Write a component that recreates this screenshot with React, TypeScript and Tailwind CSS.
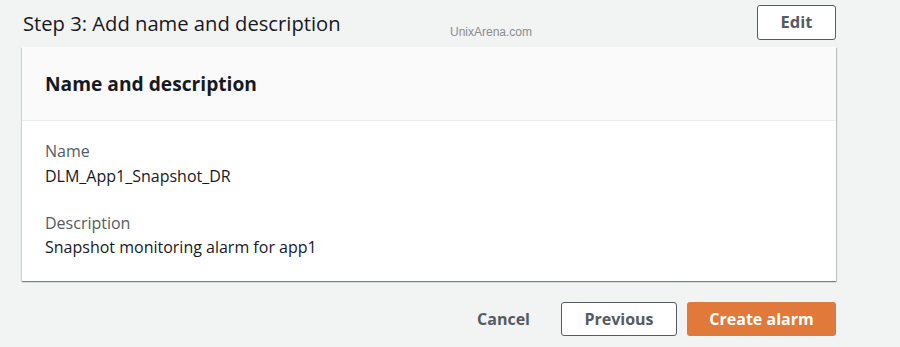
import React from "react";

export default function App() {
  return (
    <div
      className="relative w-[900px] h-[347px] bg-[#f2f3f3] overflow-hidden"
      style={{ fontFamily: '"Open Sans", "Noto Sans", Arial, sans-serif' }}
    >
      <div className="w-[814px] ml-[22px] flex flex-col">
        <div className="h-[47px] flex items-start justify-between">
          <h2 className="mt-[9px] ml-[1px] text-[20.2px] leading-[28px] text-[#16191f] font-normal">
            Step 3: Add name and description
          </h2>
          <button className="mt-[5px] w-[79px] h-[35px] rounded-[3px] border border-[#545b64] bg-white text-[#545b64] text-[16.5px] font-bold leading-none">
            Edit
          </button>
        </div>

        <div className="bg-white shadow-[0_1px_1px_0_rgba(0,28,36,0.35),1px_1px_1px_0_rgba(0,28,36,0.18),-1px_1px_1px_0_rgba(0,28,36,0.1)]">
          <div className="h-[74px] bg-[#fafafa] border-b border-[#eaeded] flex items-center px-[23px]">
            <h3 className="text-[19.2px] font-bold text-[#16191f] leading-[24px]">Name and description</h3>
          </div>
          <div className="px-[23px] pt-[19px] pb-[23px] text-[16px] leading-[22px]">
            <div className="text-[#545b64]">Name</div>
            <div className="mt-[3px] text-[#16191f]">DLM_App1_Snapshot_DR</div>
            <div className="mt-[25px] text-[#545b64]">Description</div>
            <div className="mt-[2px] text-[#16191f]">Snapshot monitoring alarm for app1</div>
          </div>
        </div>

        <div className="mt-[21px] flex justify-end items-center gap-[10px]">
          <button className="h-[34px] px-[20px] text-[16px] font-bold text-[#545b64] mr-[1px]">
            Cancel
          </button>
          <button className="h-[34px] w-[116px] rounded-[3px] border border-[#545b64] bg-white text-[16px] font-bold text-[#545b64]">
            Previous
          </button>
          <button className="h-[34px] w-[149px] rounded-[3px] bg-[#e0793a] text-[16px] font-bold text-white">
            Create alarm
          </button>
        </div>
      </div>

      <div
        className="absolute left-[450px] top-[23px] text-[12px] text-[#8a8d90]"
        style={{ fontFamily: '"Liberation Sans", Arial, sans-serif' }}
      >
        UnixArena.com
      </div>
    </div>
  );
}
